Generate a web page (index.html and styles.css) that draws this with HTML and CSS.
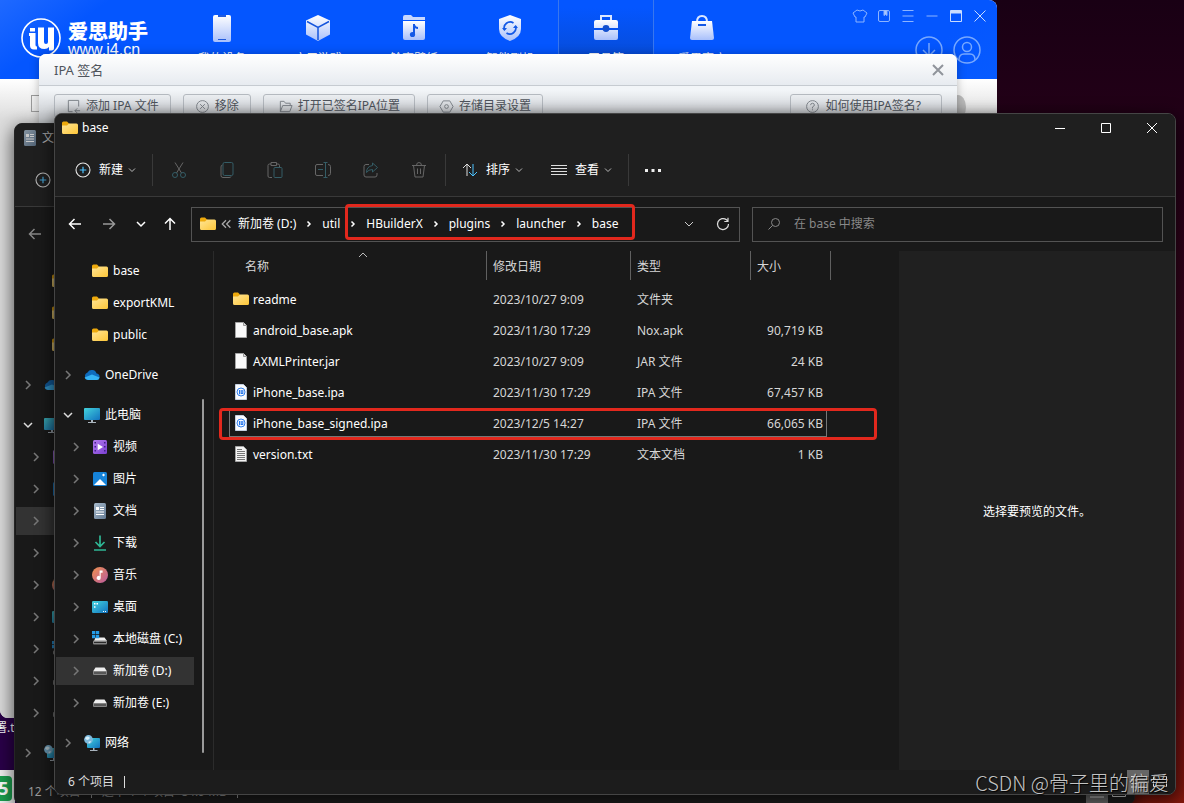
FILE: index.html
```
<!DOCTYPE html>
<html lang="zh-CN">
<head>
<meta charset="utf-8">
<meta name="viewport" content="width=device-width, initial-scale=1">
<title>base</title>
<link rel="stylesheet" href="styles.css">
</head>
<body class="desktop">
<svg class="sprite" aria-hidden="true">
  <defs>
    <linearGradient id="g-folder" x1="0" y1="0" x2="1" y2="1"><stop offset="0" stop-color="#ffe596"/><stop offset="1" stop-color="#fdc638"/></linearGradient>
    <linearGradient id="g-screen" x1="0" y1="0" x2="1" y2="1"><stop offset="0" stop-color="#43d3dc"/><stop offset="1" stop-color="#1272c0"/></linearGradient>
    <linearGradient id="g-video" x1="0" y1="0" x2="1" y2="1"><stop offset="0" stop-color="#b57bf0"/><stop offset="1" stop-color="#7a3fd0"/></linearGradient>
    <linearGradient id="g-doc" x1="0" y1="0" x2="1" y2="1"><stop offset="0" stop-color="#a9bccd"/><stop offset="1" stop-color="#647b94"/></linearGradient>
    <linearGradient id="g-music" x1="0" y1="0" x2="1" y2="1"><stop offset="0" stop-color="#f0924e"/><stop offset="1" stop-color="#b95aa0"/></linearGradient>
    <linearGradient id="g-glass" x1="0" y1="0" x2="0" y2="1"><stop offset="0" stop-color="#fff"/><stop offset="1" stop-color="#a9c0fb"/></linearGradient>
    <symbol id="folder" viewBox="0 0 16 16"><path d="M0 3Q0 1.500 1.500 1.500H5L7 3.500V7H0z" fill="#eda90c"/><path d="M0 5.500H5L7 3.500H14.500Q16 3.500 16 5V12.500Q16 14 14.500 14H1.500Q0 14 0 12.500z" fill="url(#g-folder)"/></symbol>
    <symbol id="cloud" viewBox="0 0 16 16"><path d="M4 13a4 4 0 0 1-.5-7.600A5 5 0 0 1 12.600 6.500 3.300 3.300 0 0 1 13 13z" fill="#0f6cbd"/><path d="M4 13Q1.200 13 .6 10.600L8 7.400 15.600 10.500Q15 13 12.600 13z" fill="#35b3f4"/></symbol>
    <symbol id="pc" viewBox="0 0 16 16"><rect y="1" width="16" height="12" rx="1" fill="url(#g-screen)"/><path d="M7 13h2v2h3v1H4v-1h3z" fill="#a9b4bd"/></symbol>
    <symbol id="video" viewBox="0 0 16 16"><rect x="1" y="1" width="14" height="14" rx="1.500" fill="url(#g-video)"/><path d="M2.500 3h1.500v1.500H2.500zM2.500 7h1.500v1.500H2.500zM2.500 11h1.500v1.500H2.500zM12 3h1.500v1.500H12zM12 7h1.500v1.500H12zM12 11h1.500v1.500H12z" fill="#43208a"/><path d="M5.700 4.700 11 8 5.700 11.300z" fill="#fff"/></symbol>
    <symbol id="picture" viewBox="0 0 16 16"><rect x="1" y="1" width="14" height="14" rx="1.500" fill="#1683d8"/><path d="M2 14 8 8l6 6z" fill="#fff"/><path d="m11.500 2.500 1.500 1.500-1.500 1.500L10 4z" fill="#fff"/></symbol>
    <symbol id="doc" viewBox="0 0 16 16"><rect x="2" width="12" height="16" rx="1.500" fill="url(#g-doc)"/><path d="M4 4h3v3H4zM8 4h4v1H8zM8 6h4v1H8zM4 8.500h8v1H4zM4 11h8v1H4z" fill="#fff"/></symbol>
    <symbol id="download" viewBox="0 0 16 16"><path d="M8 .5V11M3.500 7 8 11.500 12.500 7M2 15h12" fill="none" stroke="#2fb795" stroke-width="1.700"/></symbol>
    <symbol id="music" viewBox="0 0 16 16"><circle cx="8" cy="8" r="8" fill="url(#g-music)"/><path d="M7.600 3.500h3v2.200H8.700V11a2 2 0 1 1-1.100-1.800z" fill="#fff"/></symbol>
    <symbol id="deskicon" viewBox="0 0 16 16"><rect y="2" width="16" height="12" rx="1.300" fill="url(#g-screen)"/><path d="M2 4h1.500v1.500H2zM2 7.200h1.500v1.500H2zM4.500 4H6v1.500H4.500zM11 12h1v1h-1zM13 12h1v1h-1z" fill="#fff"/></symbol>
    <symbol id="drive" viewBox="0 0 16 16"><path d="M3.500 4.500h9L15 8.500H1z" fill="#eee"/><rect x="1" y="8" width="14" height="4" rx="1" fill="#858585"/><path d="M2 9.500h12v1H2z" fill="#292929"/></symbol>
    <symbol id="sysdrive" viewBox="0 0 16 16"><path d="M3.500 6.500h9L15 10H2z" fill="#eee"/><rect x="1" y="9.500" width="14" height="4" rx="1" fill="#858585"/><path d="M2 11h12v1H2z" fill="#292929"/><path d="M0 0h3.300v3.300H0zM3.900 0h3.300v3.300H3.900zM0 3.900h3.300v3.300H0zM3.900 3.900h3.300v3.300H3.900z" fill="#259ce8"/></symbol>
    <symbol id="network" viewBox="0 0 16 16"><rect x="3" y="3" width="13" height="10" rx="1" fill="url(#g-screen)"/><path d="M9 13h1.500v2h3v1H6v-1h3z" fill="#a9b4bd"/><circle cx="4.500" cy="4.500" r="4.400" fill="#7db9dc"/><path d="M1 3q3-3 5 0L4 5 2 4.500zM4 7l3-1-1 2.400z" fill="#d8f1fb"/></symbol>
    <symbol id="page" viewBox="0 0 16 16"><path d="M2.500.5h8l3 3v12h-11z" fill="#fafafa" stroke="#a5a5a5"/><path d="M10.500.5v3h3" fill="#ddd" stroke="#999"/></symbol>
    <symbol id="ipa" viewBox="0 0 16 16"><path d="M2.500.5h8l3 3v12h-11z" fill="#fafcff" stroke="#c5d0e0"/><circle cx="8" cy="8" r="4" fill="none" stroke="#3180f1"/><path d="M6.500 6v4.200M8.200 6v3.500h1.600V6" fill="none" stroke="#2376ed" stroke-width="1.100"/></symbol>
    <symbol id="txt" viewBox="0 0 16 16"><path d="M2.500.5h8l3 3v12h-11z" fill="#f4f4f4" stroke="#a5a5a5"/><path d="M4 3.500h5M4 5.500h8M4 7.500h8M4 9.500h8M4 11.500h8M4 13.500h8" stroke="#777"/></symbol>
    <symbol id="right" viewBox="0 0 16 16"><path d="m6 4 4 4-4 4" fill="none" stroke="currentColor" stroke-width="1.500"/></symbol>
    <symbol id="down" viewBox="0 0 16 16"><path d="m4 6 4 4 4-4" fill="none" stroke="currentColor" stroke-width="1.500"/></symbol>
    <symbol id="sep" viewBox="0 0 8 8"><path d="m2.500 1.500 2.500 2.500-2.500 2.500" fill="none" stroke="currentColor" stroke-width="1.500"/></symbol>
    <symbol id="tiny" viewBox="0 0 8 8"><path d="m1 2.500 3 3 3-3" fill="none" stroke="currentColor"/></symbol>
    <symbol id="plus" viewBox="0 0 16 16"><circle cx="8" cy="8" r="7" fill="none" stroke="#e4e4e4" stroke-width="1.100"/><path d="M8 4.700v6.600M4.700 8h6.600" stroke="#4cc2ff" stroke-width="1.200"/></symbol>
    <symbol id="back" viewBox="0 0 16 16"><path d="M14 8H2.500M7.500 3l-5 5 5 5" fill="none" stroke="currentColor" stroke-width="1.500"/></symbol>
    <symbol id="fwd" viewBox="0 0 16 16"><path d="M2 8h11.500M8.500 3l5 5-5 5" fill="none" stroke="currentColor" stroke-width="1.500"/></symbol>
    <symbol id="up" viewBox="0 0 16 16"><path d="M8 14V2.500M3 7.500l5-5 5 5" fill="none" stroke="currentColor" stroke-width="1.500"/></symbol>
  </defs>
</svg>

<div class="shortcut"><span class="shortcut-name">署.t</span><span class="shortcut-tile"><b class="shortcut-logo">5</b></span></div>

<section class="store" aria-label="爱思助手">
  <header class="store-head">
    <svg class="store-logo" viewBox="0 0 42 42"><circle cx="21" cy="21" r="19" fill="none" stroke="#fff" stroke-width="1.600"/><path d="M10 11h5v3.500h-5zM9 16h6.500v12q0 1.500 1.500 1.500v3h-3q-4 0-4-4V19H9zM18 10.500h6V25q0 2 2 2t2-2V10.500h6V31q0 2.500-2.500 2.500H29V30q-1.500 2-4.500 2-6.500 0-6.500-6z" fill="#fff"/></svg>
    <div class="brand"><strong class="brand-name">爱思助手</strong><span class="brand-site">www.i4.cn</span></div>
    <nav class="tabs">
      <a class="tab" href="#"><svg viewBox="0 0 32 32"><rect x="7" y="3" width="18" height="27" rx="2" fill="url(#g-glass)"/><path d="M12 3h8v2h-8zM12 27h8v1h-8z" fill="#225bdc"/></svg>我的设备</a>
      <a class="tab" href="#"><svg viewBox="0 0 32 32"><path d="m16 3 12 5.500v14L16 29 4 22.500v-14z" fill="url(#g-glass)"/><path d="m5 9.500 11 6 11-6M16 15.500V28" fill="none" stroke="#1454dc" stroke-width="1.500"/></svg>应用游戏</a>
      <a class="tab" href="#"><svg viewBox="0 0 32 32"><path d="M5 5q0-2 2-2h6l2 2h12v3H5z" fill="#c7d7fe"/><path d="M5 9h22v17q0 2-2 2H7q-2 0-2-2z" fill="url(#g-glass)"/><path d="M16 12v10.500M16 13q1 3 4 3" fill="none" stroke="#1459e6" stroke-width="2"/><circle cx="14.500" cy="22.500" r="2.600" fill="#1459e6"/></svg>铃声壁纸</a>
      <a class="tab" href="#"><svg viewBox="0 0 32 32"><path d="m16 3 11 4v10q0 8-11 12Q5 25 5 17V7z" fill="url(#g-glass)"/><path d="M10.500 18a6 6 0 0 1 9-7M21.500 14a6 6 0 0 1-9 7" fill="none" stroke="#1459e6" stroke-width="1.700"/><path d="m8 16 5 0-2.500 3zM19 16h5l-2.500-3z" fill="#1459e6"/></svg>智能刷机</a>
      <a class="tab tab-active" href="#"><svg viewBox="0 0 32 32"><path d="M11 8V4h10v4" fill="none" stroke="#dce7ff" stroke-width="2"/><path d="M4 10q0-2 2-2h20q2 0 2 2v6H4zM4 18h24v8q0 2-2 2H6q-2 0-2-2z" fill="url(#g-glass)"/><circle cx="16" cy="16.500" r="3.400" fill="#1250cf"/></svg>工具箱</a>
      <a class="tab" href="#"><svg viewBox="0 0 32 32"><path d="M11 10q0-6 5-6t5 6" fill="none" stroke="#dce7ff" stroke-width="2"/><path d="M6 9h20l2 17q0 2-2 2H6q-2 0-2-2z" fill="url(#g-glass)"/><path d="M12 13h8" stroke="#1459e6" stroke-width="2"/></svg>爱思商店</a>
    </nav>
    <div class="store-side">
      <div class="store-tools">
        <button aria-label="皮肤"><svg viewBox="0 0 16 16"><path d="M5 2q3 2 6 0l4 3-2 4h-1v5H4V9H3L1 5z"/></svg></button>
        <button aria-label="收藏"><svg viewBox="0 0 16 16"><rect x="2.500" y="2.500" width="11" height="11" rx="1.500"/><path d="M8 2.500v5l1.500-1L11 7.500v-5" fill="#a9c6ff"/></svg></button>
        <button aria-label="菜单"><svg viewBox="0 0 16 16"><path d="M2.500 2.500h11M2.500 8h11M2.500 13.500h11"/></svg></button>
        <button aria-label="最小化"><svg viewBox="0 0 16 16"><path d="M2.500 8h11"/></svg></button>
        <button aria-label="最大化"><svg class="bright" viewBox="0 0 16 16"><path d="M2.500 2.500h11v11h-11z"/><path d="M3 4h10" stroke-width="3"/></svg></button>
        <button aria-label="关闭"><svg class="bright" viewBox="0 0 16 16"><path d="m2.500 2.500 11 11M13.500 2.500l-11 11"/></svg></button>
      </div>
      <div class="store-account">
        <button aria-label="下载"><svg viewBox="0 0 30 30"><circle cx="15" cy="15" r="13"/><path d="M15 8v13M9 15l6 6 6-6"/></svg></button>
        <button aria-label="账户"><svg viewBox="0 0 30 30"><circle cx="15" cy="15" r="13"/><circle cx="15" cy="12" r="4.500"/><path d="M7 25q0-6 5-6h6q5 0 5 6"/></svg></button>
      </div>
    </div>
  </header>
  <div class="store-body"><span class="device"></span><span class="pager"></span></div>
</section>

<section class="dialog" aria-label="IPA 签名">
  <header class="dialog-head"><h2 class="dialog-title">IPA 签名</h2><button class="dialog-close" aria-label="关闭"><svg viewBox="0 0 16 16"><path d="m3 3 10 10M13 3 3 13" stroke="#90949b" stroke-width="2"/></svg></button></header>
  <div class="dialog-bar">
    <button class="tool"><svg viewBox="0 0 16 16"><path d="M7 13.500H2.500v-12h11V8M15 12.500H9.500M12 10l-2.500 2.500L12 15"/></svg>添加 IPA 文件</button>
    <button class="tool"><svg viewBox="0 0 16 16"><circle cx="8" cy="8" r="6.300"/><path d="m5.500 5.500 5 5M10.500 5.500l-5 5"/></svg>移除</button>
    <button class="tool tool-wide"><svg viewBox="0 0 16 16"><path d="M2.500 13.500v-11h4l1.500 2h5V7M2.500 13.500 5 7h10l-2.500 6.500z"/></svg>打开已签名IPA位置</button>
    <button class="tool"><svg viewBox="0 0 16 16"><path d="M4.500 2h7L15 8l-3.500 6h-7L1 8z"/><circle cx="8" cy="8" r="2"/></svg>存储目录设置</button>
    <button class="tool tool-help"><svg viewBox="0 0 16 16"><circle cx="8" cy="8" r="6.300"/><path d="M6 6.500q0-2 2-2t2 2q0 1-2 2V10M8 11v1"/></svg>如何使用IPA签名?</button>
  </div>
</section>

<section class="explorer explorer-back" aria-label="文档">
  <header class="titlebar"><svg class="ico"><use href="#doc"/></svg><h2 class="title">文档</h2></header>
  <div class="toolbar"><button class="cmd"><svg class="ico"><use href="#plus"/></svg>新建</button></div>
  <div class="navbar"><button class="nav nav-wide" aria-label="后退"><svg class="ico"><use href="#back"/></svg></button></div>
  <div class="content">
    <nav class="sidebar"><div class="tree">
      <button class="node leaf"><svg class="ico"><use href="#folder"/></svg></button>
      <button class="node leaf"><svg class="ico"><use href="#folder"/></svg></button>
      <button class="node leaf"><svg class="ico"><use href="#folder"/></svg></button>
      <button class="node root"><svg class="arrow"><use href="#right"/></svg><svg class="ico"><use href="#cloud"/></svg></button>
      <button class="node root"><svg class="arrow open"><use href="#down"/></svg><svg class="ico"><use href="#pc"/></svg></button>
      <button class="node"><svg class="arrow"><use href="#right"/></svg><svg class="ico"><use href="#video"/></svg></button>
      <button class="node"><svg class="arrow"><use href="#right"/></svg><svg class="ico"><use href="#picture"/></svg></button>
      <button class="node selected"><svg class="arrow"><use href="#right"/></svg><svg class="ico"><use href="#doc"/></svg></button>
      <button class="node"><svg class="arrow"><use href="#right"/></svg><svg class="ico"><use href="#download"/></svg></button>
      <button class="node"><svg class="arrow"><use href="#right"/></svg><svg class="ico"><use href="#music"/></svg></button>
      <button class="node"><svg class="arrow"><use href="#right"/></svg><svg class="ico"><use href="#deskicon"/></svg></button>
      <button class="node"><svg class="arrow"><use href="#right"/></svg><svg class="ico"><use href="#sysdrive"/></svg></button>
      <button class="node"><svg class="arrow"><use href="#right"/></svg><svg class="ico"><use href="#drive"/></svg></button>
      <button class="node"><svg class="arrow"><use href="#right"/></svg><svg class="ico"><use href="#drive"/></svg></button>
      <button class="node root"><svg class="arrow"><use href="#right"/></svg><svg class="ico"><use href="#network"/></svg></button>
    </div></nav>
  </div>
  <footer class="status"><span>12 个项目</span><i class="bar"></i><span>选中 1 个项目&nbsp; 84.9 MB</span><i class="bar"></i>
    <div class="views"><span class="view view-on"><svg viewBox="0 0 16 16"><path d="M1 2.500h14M1 6h14M1 9.500h14M1 13h14"/></svg></span><span class="view"><svg viewBox="0 0 16 16"><path d="M1.500 2.500h13v10h-13zM4 5.500h8M4 9h8"/></svg></span></div>
  </footer>
</section>

<main class="explorer explorer-main">
  <header class="titlebar"><svg class="ico"><use href="#folder"/></svg><h1 class="title">base</h1>
    <div class="controls">
      <button aria-label="最小化"><svg viewBox="0 0 16 16"><path d="M3 8.500h10"/></svg></button>
      <button aria-label="最大化"><svg viewBox="0 0 16 16"><path d="M3.500 3.500h9v9h-9z"/></svg></button>
      <button aria-label="关闭"><svg viewBox="0 0 16 16"><path d="m3 3 10 10M13 3 3 13"/></svg></button>
    </div>
  </header>
  <div class="toolbar">
    <button class="cmd"><svg class="ico"><use href="#plus"/></svg>新建<svg class="mini"><use href="#tiny"/></svg></button>
    <i class="rule"></i>
    <button class="icon-cmd" aria-label="剪切"><svg viewBox="0 0 18 18"><path d="M5 1.500 11.500 12M13 1.500 6.500 12" stroke="#666"/><circle cx="5" cy="14" r="2.500"/><circle cx="13" cy="14" r="2.500"/></svg></button>
    <button class="icon-cmd" aria-label="复制"><svg viewBox="0 0 18 18"><path d="M4.500 4q-1.500 0-1.500 2v8.500Q3 16.500 5 16.500h6q2 0 2-1" stroke="#666"/><rect x="5" y="1.500" width="10" height="13" rx="1.500"/></svg></button>
    <button class="icon-cmd" aria-label="粘贴"><svg viewBox="0 0 18 18"><path d="M6 16.500H3.500q-1.500 0-1.500-1.500V4.500Q2 3 3.500 3H5M10 3h2q1.500 0 1.500 1.500V6M5 1.500h5.500v3H5z" stroke="#666"/><rect x="8" y="6.500" width="8" height="10" rx="1"/></svg></button>
    <button class="icon-cmd" aria-label="重命名"><svg viewBox="0 0 18 18"><path d="M9 3.500H3q-1.500 0-1.500 1.500v8q0 1.500 1.500 1.500h6M14 3.500q2.500 0 2.500 2v7q0 2-2.500 2" stroke="#666"/><path d="M11.500 1.500v15M9.500 1.500h4M9.500 16.500h4M4 8.500h5"/></svg></button>
    <button class="icon-cmd" aria-label="共享"><svg viewBox="0 0 18 18"><path d="M7 3.500H4q-2 0-2 2V14q0 2 2 2h9q2 0 2-2v-2" stroke="#666"/><path d="m10.500 2 5 4.500-5 4.500V8.500q-4 0-6 3 0-6 6-7z"/></svg></button>
    <button class="icon-cmd" aria-label="删除"><svg viewBox="0 0 18 18"><path d="M2 4.500h14M6.500 4.500q0-3 2.500-3t2.500 3M3.500 4.500 5 16h8l1.500-11.500M7.500 7.500V13M10.500 7.500V13" stroke="#666"/></svg></button>
    <i class="rule"></i>
    <button class="cmd"><svg class="ico" viewBox="0 0 16 16"><path d="M5 14V2M1 6l4-4 4 4" fill="none" stroke="#ddd"/><path d="M11 2v12M7 10l4 4 4-4" fill="none" stroke="#4cc2ff"/></svg>排序<svg class="mini"><use href="#tiny"/></svg></button>
    <button class="cmd"><svg class="ico" viewBox="0 0 16 16"><path d="M0 3.500h16M0 6.500h16M0 9.500h16M0 12.500h16" stroke="#ddd"/></svg>查看<svg class="mini"><use href="#tiny"/></svg></button>
    <i class="rule"></i>
    <button class="cmd" aria-label="更多"><svg class="ico" viewBox="0 0 16 16"><path d="M0 7h3v3H0zM6.500 7h3v3h-3zM13 7h3v3h-3z" fill="#eee"/></svg></button>
  </div>
  <div class="navbar">
    <button class="nav nav-wide" aria-label="后退"><svg class="ico"><use href="#back"/></svg></button>
    <button class="nav nav-wide nav-dim" aria-label="前进"><svg class="ico"><use href="#fwd"/></svg></button>
    <button class="nav" aria-label="最近"><svg class="ico"><use href="#down"/></svg></button>
    <button class="nav" aria-label="向上"><svg class="ico"><use href="#up"/></svg></button>
    <div class="address">
      <svg class="ico"><use href="#folder"/></svg><svg class="more" viewBox="0 0 8 8"><path d="M4 1 1 4l3 3M7.500 1l-3 3 3 3" fill="none" stroke="#aaa"/></svg>
      <a href="#">新加卷 (D:)</a><svg class="mini"><use href="#sep"/></svg><a href="#">util</a>
      <span class="crumbs"><svg class="mini"><use href="#sep"/></svg><a href="#">HBuilderX</a><svg class="mini"><use href="#sep"/></svg><a href="#">plugins</a><svg class="mini"><use href="#sep"/></svg><a href="#">launcher</a><svg class="mini"><use href="#sep"/></svg><a href="#">base</a></span>
      <span class="address-tools">
        <button aria-label="历史"><svg class="ico" viewBox="0 0 16 16"><path d="m4 6 4 4 4-4" fill="none" stroke="#ccc"/></svg></button>
        <button aria-label="刷新"><svg class="ico" viewBox="0 0 16 16"><path d="M13.500 8A5.500 5.500 0 1 1 11.500 3.800L13 5.300M13 1.800v3.700H9.300" fill="none" stroke="#ddd" stroke-width="1.200"/></svg></button>
      </span>
    </div>
    <label class="search"><svg class="ico" viewBox="0 0 16 16"><circle cx="9.500" cy="6.500" r="4" fill="none" stroke="#888"/><path d="m6.500 9.500-4 4" stroke="#888"/></svg><input type="text" aria-label="搜索" placeholder="在 base 中搜索"></label>
  </div>
  <div class="content">
    <nav class="sidebar">
      <div class="tree">
        <button class="node leaf"><svg class="ico"><use href="#folder"/></svg>base</button>
        <button class="node leaf"><svg class="ico"><use href="#folder"/></svg>exportKML</button>
        <button class="node leaf"><svg class="ico"><use href="#folder"/></svg>public</button>
        <button class="node root"><svg class="arrow"><use href="#right"/></svg><svg class="ico"><use href="#cloud"/></svg>OneDrive</button>
        <button class="node root"><svg class="arrow open"><use href="#down"/></svg><svg class="ico"><use href="#pc"/></svg>此电脑</button>
        <button class="node"><svg class="arrow"><use href="#right"/></svg><svg class="ico"><use href="#video"/></svg>视频</button>
        <button class="node"><svg class="arrow"><use href="#right"/></svg><svg class="ico"><use href="#picture"/></svg>图片</button>
        <button class="node"><svg class="arrow"><use href="#right"/></svg><svg class="ico"><use href="#doc"/></svg>文档</button>
        <button class="node"><svg class="arrow"><use href="#right"/></svg><svg class="ico"><use href="#download"/></svg>下载</button>
        <button class="node"><svg class="arrow"><use href="#right"/></svg><svg class="ico"><use href="#music"/></svg>音乐</button>
        <button class="node"><svg class="arrow"><use href="#right"/></svg><svg class="ico"><use href="#deskicon"/></svg>桌面</button>
        <button class="node"><svg class="arrow"><use href="#right"/></svg><svg class="ico"><use href="#sysdrive"/></svg>本地磁盘 (C:)</button>
        <button class="node selected"><svg class="arrow"><use href="#right"/></svg><svg class="ico"><use href="#drive"/></svg>新加卷 (D:)</button>
        <button class="node"><svg class="arrow"><use href="#right"/></svg><svg class="ico"><use href="#drive"/></svg>新加卷 (E:)</button>
        <button class="node root"><svg class="arrow"><use href="#right"/></svg><svg class="ico"><use href="#network"/></svg>网络</button>
      </div>
      <div class="thumb"></div>
    </nav>
    <div class="listing">
      <table class="files">
        <colgroup><col class="c-name"><col class="c-date"><col class="c-type"><col class="c-size"></colgroup>
        <thead><tr><th>名称<svg class="mini sort" viewBox="0 0 10 8"><path d="m1 6 4-4 4 4" fill="none" stroke="#bbb"/></svg></th><th>修改日期</th><th>类型</th><th>大小</th></tr></thead>
        <tbody>
          <tr><td><svg class="ico"><use href="#folder"/></svg>readme</td><td>2023/10/27 9:09</td><td>文件夹</td><td></td></tr>
          <tr><td><svg class="ico"><use href="#page"/></svg>android_base.apk</td><td>2023/11/30 17:29</td><td>Nox.apk</td><td>90,719 KB</td></tr>
          <tr><td><svg class="ico"><use href="#page"/></svg>AXMLPrinter.jar</td><td>2023/10/27 9:09</td><td>JAR 文件</td><td>24 KB</td></tr>
          <tr><td><svg class="ico"><use href="#ipa"/></svg>iPhone_base.ipa</td><td>2023/11/30 17:29</td><td>IPA 文件</td><td>67,457 KB</td></tr>
          <tr class="focused"><td><svg class="ico"><use href="#ipa"/></svg>iPhone_base_signed.ipa</td><td>2023/12/5 14:27</td><td>IPA 文件</td><td>66,065 KB</td></tr>
          <tr><td><svg class="ico"><use href="#txt"/></svg>version.txt</td><td>2023/11/30 17:29</td><td>文本文档</td><td>1 KB</td></tr>
        </tbody>
      </table>
    </div>
    <aside class="preview">选择要预览的文件。</aside>
  </div>
  <footer class="status"><span>6 个项目</span><i class="bar"></i>
    <div class="views"><span class="view view-on"><svg viewBox="0 0 16 16"><path d="M1 2.500h14M1 6h14M1 9.500h14M1 13h14"/></svg></span><span class="view"><svg viewBox="0 0 16 16"><path d="M1.500 2.500h13v10h-13zM4 5.500h8M4 9h8"/></svg></span></div>
  </footer>
</main>
<p class="credit">CSDN @骨子里的偏爱</p>
</body>
</html>
```

FILE: styles.css
```
* { box-sizing: border-box; }

body, h1, h2, p { margin: 0; }

button {
  padding: 0;
  border: 0;
  background: none;
  color: inherit;
  font: inherit;
  white-space: nowrap;
}

a { color: inherit; text-decoration: none; }

svg { flex: none; display: block; }

.desktop {
  position: relative;
  height: 100vh;
  overflow: hidden;
  background: linear-gradient(to right, #2a0049 0 60%, transparent 75%), linear-gradient(#190014, #260018 20%, #480a20 60%, #5c0b16 85%, #85180c);
  color: #fff;
  font: 12px/16px "Noto Sans", "Noto Sans CJK SC", sans-serif;
}

.sprite { position: absolute; width: 0; height: 0; }
.ico { width: 16px; height: 16px; }
.mini { width: 8px; height: 8px; }

/* Desktop shortcut */
.shortcut {
  position: absolute;
  left: -5px;
  bottom: 0;
  display: flex;
  flex-direction: column;
  gap: 34px;
}
.shortcut-tile { padding: 6px 0 2px; background: #f2f2f2; }
.shortcut-logo {
  display: block;
  width: 17px;
  border-radius: 4px;
  background: #1ba04f;
  font-size: 18px;
  line-height: 25px;
  text-align: center;
}

/* Store window */
.store {
  position: absolute;
  inset: 0 187px 85px 0;
  display: flex;
  flex-direction: column;
  overflow: hidden;
  border-radius: 0 8px 8px 8px;
  background: #fff;
}
.store-head {
  display: flex;
  height: 79px;
  padding-left: 20px;
  background: linear-gradient(145deg, #1f69ff 0, #0456ff 10%, #0456ff 90%, #075bff);
}
.store-logo { width: 42px; height: 42px; margin-top: 17px; }
.brand { width: 112px; padding: 21px 0 0 6px; }
.brand-name { display: block; font-size: 20px; font-weight: 900; line-height: 22px; }
.brand-site { display: block; font: 16px/14px "Liberation Sans", sans-serif; }
.tabs { display: flex; }
.tab {
  display: flex;
  flex-direction: column;
  align-items: center;
  gap: 7px;
  width: 96px;
  padding-top: 12px;
}
.tab svg { width: 32px; height: 32px; }
.tab-active {
  border: solid #3977ee;
  border-width: 0 1px;
  background: linear-gradient(#0456ff 10%, #0848c8);
}
.store-side { flex: 1; padding: 7px 5px 0 0; }
.store-side svg { fill: none; stroke: #8db4ff; }
.store-side .bright { stroke: #c9dcff; }
.store-tools, .store-account { display: flex; justify-content: flex-end; }
.store-tools button { display: grid; place-items: center; width: 24px; height: 18px; }
.store-tools svg { width: 16px; height: 16px; }
.store-account { gap: 8px; padding: 10px 10px 0 0; }
.store-account svg { width: 30px; height: 30px; stroke: #77a8ff; stroke-width: 1.5; }
.store-body {
  display: flex;
  flex: 1;
  justify-content: space-between;
  padding: 16px 31px;
  background: linear-gradient(#fff, #ddd 40px);
}
.device { width: 14px; height: 17px; border: 1px solid #999; }
.pager { width: 16px; height: 24px; border-radius: 50%; background: #bbb; }

/* Signing dialog */
.dialog {
  position: absolute;
  inset: 54px 227px 110px 39px;
  border-radius: 7px;
  background: linear-gradient(#f2f5f8 36px, #cfd2d6 60px);
  box-shadow: 0 0 10px #0004;
  color: #4f545c;
}
.dialog-head {
  display: flex;
  align-items: center;
  justify-content: space-between;
  height: 32px;
  padding: 0 11px 0 15px;
  border-bottom: 1px solid #c6cbd1;
  border-radius: 7px 7px 0 0;
  background: linear-gradient(#fff, #e7ebf0);
}
.dialog-title { font-size: 13px; font-weight: 400; }
.dialog-close svg { width: 16px; height: 16px; }
.dialog-bar { display: flex; gap: 12px; padding: 8px 15px; }
.tool {
  display: flex;
  align-items: center;
  gap: 5px;
  height: 24px;
  padding: 0 11px;
  border: 1px solid #b4b9bf;
  border-radius: 3px;
}
.tool-wide { padding: 0 14px; }
.tool-help { margin-left: auto; padding: 0 20px 0 14px; }
.tool svg { width: 15px; height: 15px; fill: none; stroke: #7d8289; }

/* Explorer windows */
.explorer {
  position: absolute;
  display: flex;
  flex-direction: column;
  overflow: hidden;
  border: 1px solid #454545;
  border-radius: 8px;
  background: #191919;
}
.explorer-main { inset: 113px 8px 8px 54px; box-shadow: 0 4px 16px 2px #0009; }
.explorer-back {
  inset: 123px 49px -2px 14px;
  border-color: #252525;
  box-shadow: 0 6px 18px 2px #0009;
  color: #aaa;
}
.explorer-back .ico { opacity: .75; }
.titlebar {
  display: flex;
  align-items: center;
  gap: 4px;
  height: 27px;
  padding-left: 7px;
  background: #1f1f1f;
}
.title { font-size: 12px; font-weight: 400; }
.controls { display: flex; margin-left: auto; }
.controls button { display: grid; place-items: center; width: 46px; height: 27px; }
.controls svg { width: 16px; height: 16px; fill: none; stroke: #fff; }
.toolbar {
  display: flex;
  align-items: center;
  height: 56px;
  padding: 3px 0 0 6px;
  border-bottom: 1px solid #393939;
  background: #1f1f1f;
}
.cmd { display: flex; align-items: center; gap: 8px; height: 32px; padding: 0 14px; }
.cmd .mini { margin-left: -3px; color: #bbb; }
.icon-cmd { display: grid; place-items: center; width: 48px; height: 32px; }
.icon-cmd svg { width: 18px; height: 18px; fill: none; stroke: #345d66; }
.rule { width: 1px; height: 32px; margin: 0 2px; background: #393939; }

.navbar { display: flex; align-items: center; height: 54px; padding: 0 12px 0 3px; }
.nav { display: grid; place-items: center; width: 29px; height: 32px; }
.nav-wide { width: 34px; }
.nav-dim { color: #999; }
.address, .search {
  display: flex;
  align-items: center;
  height: 35px;
  border: 1px solid #535353;
}
.address { flex: 531; margin: 0 12px 0 7px; padding: 0 8px; }
.search { flex: 383; gap: 12px; padding: 0 13px; }
.more { width: 10px; height: 10px; margin: 0 7px 0 5px; }
.address .mini { margin: 0 9px; }
.crumbs {
  position: relative;
  display: flex;
  align-items: center;
}
.crumbs::after {
  position: absolute;
  inset: -12px -17px -8px 5px;
  border: 3px solid #e2281d;
  border-radius: 4px;
  content: "";
}
.address-tools { display: flex; gap: 18px; margin-left: auto; }
.search input {
  flex: 1;
  min-width: 0;
  padding: 0;
  border: 0;
  outline: 0;
  background: none;
  color: #ddd;
  font: inherit;
}
.search input::placeholder { color: #888; }

.content { display: flex; flex: 1; min-height: 0; }
.sidebar {
  display: flex;
  flex: none;
  gap: 8px;
  width: 159px;
  padding-left: 1px;
  border-right: 1px solid #2b2b2b;
}
.tree { display: flex; flex-direction: column; gap: 4px; width: 138px; padding-top: 6px; }
.node {
  display: flex;
  align-items: center;
  gap: 5px;
  height: 28px;
  padding-left: 12px;
}
.leaf { padding-left: 36px; }
.root { padding-left: 4px; }
.leaf + .root, .root + .root, .node:not(.root) + .root { margin-top: 8px; }
.selected { background: #333; }
.arrow { width: 16px; height: 16px; margin-right: 3px; color: #777; }
.open { color: #ddd; }
.thumb { width: 2px; margin: 148px 0 17px; border-radius: 1px; background: #9a9a9a; }

.listing { flex: 1; min-width: 0; padding-left: 15px; }
.files { table-layout: fixed; width: 602px; border-spacing: 0; color: #d6d6d6; }
.c-name { width: 258px; }
.c-date { width: 144px; }
.c-type { width: 120px; }
.c-size { width: 80px; }
.files th {
  position: relative;
  height: 29px;
  padding: 2px 0 0 6px;
  border-right: 1px solid #606060;
  font-weight: 400;
  text-align: left;
}
.files th:first-child { padding-left: 16px; }
.sort { position: absolute; top: 0; left: 50%; width: 10px; }
.files tbody::before { display: block; height: 4px; content: ""; }
.files td { height: 31px; padding: 0 0 0 6px; white-space: nowrap; }
.files td:first-child { padding-left: 4px; color: #fff; }
.files td:last-child { padding-right: 8px; text-align: right; }
.files .ico { display: inline-block; margin-right: 4px; vertical-align: -3px; }
.focused { position: relative; }
.focused td:first-child::before, .focused td:first-child::after { position: absolute; content: ""; }
.focused td:first-child::before { inset: 1px 4px 2px 0; border: 1px solid #777; }
.focused td:first-child::after {
  inset: 0 -46px -1px -10px;
  border: 3px solid #e2281d;
  border-radius: 4px;
}
.preview {
  display: grid;
  flex: 0 0 276px;
  place-items: center;
  padding-top: 2px;
  background: #202020;
}

.status {
  display: flex;
  align-items: center;
  gap: 10px;
  height: 24px;
  padding-left: 13px;
  background: #1c1c1c;
  color: #ddd;
}
.explorer-back .status { color: #999; }
.bar { width: 1px; height: 12px; background: currentColor; }
.views { display: flex; align-self: stretch; margin-left: auto; padding-right: 4px; }
.view { display: grid; place-items: center; width: 22px; }
.view-on { background: #666; }
.view svg { width: 16px; height: 16px; fill: none; stroke: #ddd; }

.credit {
  position: absolute;
  right: 15px;
  bottom: 6px;
  color: #c4c4c4;
  font: 20px/28px "Noto Sans CJK SC", sans-serif;
  font-weight: 300;
  text-shadow: 1px 1px 1px #000;
}
```
